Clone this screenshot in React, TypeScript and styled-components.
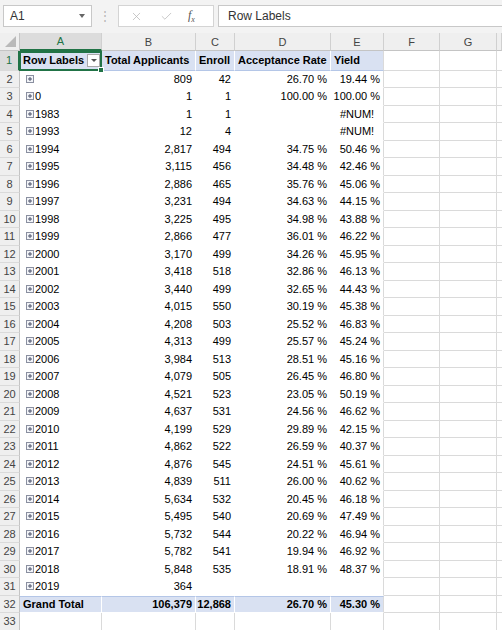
import React from 'react';
import styled, { createGlobalStyle } from 'styled-components';
import { X, Check } from 'lucide-react';

const Global = createGlobalStyle`
  html, body { margin: 0; padding: 0; background: #fff; }
  body { font-family: "Liberation Sans", Arial, sans-serif; }
  * { box-sizing: border-box; }
`;

const COLS = '20px 82px 94px 39px 96px 53px 56px 57px 1fr';
const GRID = '#dadada';
const HEAD_BG = '#efefef';
const PIVOT_BLUE = '#d9e1f2';
const GREEN = '#217346';

const Page = styled.div`
  width: 502px;
  height: 630px;
  overflow: hidden;
  background: #fff;
  display: flex;
  flex-direction: column;
`;

const FormulaBar = styled.div`
  height: 33px;
  flex: none;
  background: #f3f3f3;
  display: flex;
  align-items: flex-start;
  padding: 5px 0 0 3px;
`;

const NameBox = styled.div`
  width: 89px;
  height: 22px;
  background: #fff;
  border: 1px solid #c8c8c8;
  display: flex;
  align-items: center;
  justify-content: space-between;
  padding: 0 6px 0 6px;
  font-size: 12px;
  color: #333;
`;

const Caret = styled.span`
  width: 0;
  height: 0;
  border-left: 3.5px solid transparent;
  border-right: 3.5px solid transparent;
  border-top: 4px solid #666;
`;

const Dots = styled.div`
  width: 26px;
  height: 22px;
  display: flex;
  align-items: center;
  justify-content: center;
  color: #b5b5b5;
  font-size: 12px;
`;

const EditBox = styled.div`
  width: 96px;
  height: 22px;
  background: #fff;
  border: 1px solid #d4d4d4;
  display: flex;
  align-items: center;
  padding-left: 11px;
  gap: 17px;
  color: #b8b8b8;
`;

const Fx = styled.span`
  font-family: "Liberation Serif", "Times New Roman", serif;
  font-style: italic;
  font-size: 12px;
  color: #555;
  margin-left: -2px;
  sub {
    font-size: 8px;
    font-style: italic;
  }
`;

const FormulaInput = styled.div`
  flex: 1;
  height: 22px;
  margin-left: 4px;
  background: #fff;
  border: 1px solid #c8c8c8;
  border-right: none;
  display: flex;
  align-items: center;
  padding-left: 9px;
  font-size: 12px;
  color: #333;
`;

const Sheet = styled.div`
  flex: 1;
  display: flex;
  flex-direction: column;
`;

const Row = styled.div<{ $h: number }>`
  display: grid;
  grid-template-columns: ${COLS};
  height: ${(p) => p.$h}px;
  flex: none;
`;

const ColHead = styled.div<{ $sel?: boolean }>`
  background: ${(p) => (p.$sel ? '#dcdcdc' : HEAD_BG)};
  color: ${(p) => (p.$sel ? GREEN : '#444')};
  border-right: 1px solid #d0d0d0;
  border-bottom: ${(p) => (p.$sel ? `2px solid ${GREEN}` : '1px solid #c4c4c4')};
  font-size: 11px;
  display: flex;
  align-items: center;
  justify-content: center;
`;

const Corner = styled.div`
  background: ${HEAD_BG};
  border-right: 1px solid #c4c4c4;
  border-bottom: 1px solid #c4c4c4;
  display: flex;
  align-items: flex-end;
  justify-content: flex-end;
  padding: 0 3px 3px 0;
`;

const RowHead = styled.div<{ $sel?: boolean }>`
  background: ${(p) => (p.$sel ? '#dcdcdc' : HEAD_BG)};
  color: ${(p) => (p.$sel ? GREEN : '#444')};
  border-right: ${(p) => (p.$sel ? `2px solid ${GREEN}` : '1px solid #c4c4c4')};
  border-bottom: 1px solid #dadada;
  font-size: 11px;
  display: flex;
  align-items: center;
  justify-content: center;
`;

type Align = 'left' | 'right' | 'center';

const Cell = styled.div<{
  $align?: Align;
  $bold?: boolean;
  $fill?: string;
  $lines?: boolean;
  $top?: string;
  $bottom?: string;
}>`
  position: relative;
  background: ${(p) => p.$fill || '#fff'};
  border-right: 1px solid ${(p) => (p.$lines ? GRID : 'transparent')};
  border-bottom: 1px solid ${(p) => (p.$bottom ? p.$bottom : p.$lines ? GRID : 'transparent')};
  ${(p) => (p.$top ? `border-top: 1px solid ${p.$top};` : '')}
  background-clip: padding-box;
  font-size: 11px;
  font-weight: ${(p) => (p.$bold ? 700 : 400)};
  color: #000;
  display: flex;
  align-items: center;
  justify-content: ${(p) =>
    p.$align === 'right' ? 'flex-end' : p.$align === 'center' ? 'center' : 'flex-start'};
  padding: 0 3px;
  white-space: nowrap;
  overflow: visible;
`;

const Selection = styled.div`
  position: absolute;
  left: -1px;
  top: 0px;
  right: -1px;
  bottom: -1px;
  border: 2px solid ${GREEN};
  pointer-events: none;
  z-index: 2;
`;

const Handle = styled.div`
  position: absolute;
  right: -4px;
  bottom: -4px;
  width: 6px;
  height: 6px;
  background: ${GREEN};
  border: 1px solid #fff;
  z-index: 3;
`;

const FilterButton = styled.div`
  margin-left: auto;
  margin-right: -2px;
  width: 13px;
  height: 13px;
  background: #fff;
  border: 1px solid #a9a9a9;
  display: flex;
  align-items: center;
  justify-content: center;
`;

const SmallTri = styled.span`
  width: 0;
  height: 0;
  border-left: 3px solid transparent;
  border-right: 3px solid transparent;
  border-top: 3px solid #555;
`;

const ExpandBox = styled.svg`
  flex: none;
  margin: 0 1px 0 3px;
`;

const Expand = () => (
  <ExpandBox width="8" height="8" viewBox="0 0 8 8">
    <rect x="0.5" y="0.5" width="7" height="7" fill="#f2f4f8" stroke="#8a8fa0" />
    <line x1="2" y1="4" x2="6" y2="4" stroke="#4a5068" />
    <line x1="4" y1="2" x2="4" y2="6" stroke="#4a5068" />
  </ExpandBox>
);

const CornerTri = () => (
  <svg width="11" height="11" viewBox="0 0 11 11">
    <polygon points="11,0 11,11 0,11" fill="#b9b9b9" />
  </svg>
);

type Rec = [string, string, string, string, string];

const data: Rec[] = [
  ['', '809', '42', '26.70 %', '19.44 %'],
  ['0', '1', '1', '100.00 %', '100.00 %'],
  ['1983', '1', '1', '', '#NUM!'],
  ['1993', '12', '4', '', '#NUM!'],
  ['1994', '2,817', '494', '34.75 %', '50.46 %'],
  ['1995', '3,115', '456', '34.48 %', '42.46 %'],
  ['1996', '2,886', '465', '35.76 %', '45.06 %'],
  ['1997', '3,231', '494', '34.63 %', '44.15 %'],
  ['1998', '3,225', '495', '34.98 %', '43.88 %'],
  ['1999', '2,866', '477', '36.01 %', '46.22 %'],
  ['2000', '3,170', '499', '34.26 %', '45.95 %'],
  ['2001', '3,418', '518', '32.86 %', '46.13 %'],
  ['2002', '3,440', '499', '32.65 %', '44.43 %'],
  ['2003', '4,015', '550', '30.19 %', '45.38 %'],
  ['2004', '4,208', '503', '25.52 %', '46.83 %'],
  ['2005', '4,313', '499', '25.57 %', '45.24 %'],
  ['2006', '3,984', '513', '28.51 %', '45.16 %'],
  ['2007', '4,079', '505', '26.45 %', '46.80 %'],
  ['2008', '4,521', '523', '23.05 %', '50.19 %'],
  ['2009', '4,637', '531', '24.56 %', '46.62 %'],
  ['2010', '4,199', '529', '29.89 %', '42.15 %'],
  ['2011', '4,862', '522', '26.59 %', '40.37 %'],
  ['2012', '4,876', '545', '24.51 %', '45.61 %'],
  ['2013', '4,839', '511', '26.00 %', '40.62 %'],
  ['2014', '5,634', '532', '20.45 %', '46.18 %'],
  ['2015', '5,495', '540', '20.69 %', '47.49 %'],
  ['2016', '5,732', '544', '20.22 %', '46.94 %'],
  ['2017', '5,782', '541', '19.94 %', '46.92 %'],
  ['2018', '5,848', '535', '18.91 %', '48.37 %'],
  ['2019', '364', '', '', ''],
];

const letters = ['A', 'B', 'C', 'D', 'E', 'F', 'G', ''];

const BlankTail = () => (
  <>
    <Cell $lines />
    <Cell $lines />
    <Cell $lines />
  </>
);

export default function App() {
  const RH = 17.5;
  return (
    <Page>
      <Global />
      <FormulaBar>
        <NameBox>
          <span>A1</span>
          <Caret />
        </NameBox>
        <Dots>⋮</Dots>
        <EditBox>
          <X size={13} strokeWidth={1.4} />
          <Check size={13} strokeWidth={1.4} />
          <Fx>
            f<sub>x</sub>
          </Fx>
        </EditBox>
        <FormulaInput>Row Labels</FormulaInput>
      </FormulaBar>
      <Sheet>
        <Row $h={18}>
          <Corner>
            <CornerTri />
          </Corner>
          {letters.map((l, i) => (
            <ColHead key={i} $sel={l === 'A'}>
              {l}
            </ColHead>
          ))}
        </Row>
        <Row $h={19.5}>
          <RowHead $sel>1</RowHead>
          <Cell $bold $fill={PIVOT_BLUE} $bottom="#b4c6e7">
            Row Labels
            <FilterButton>
              <SmallTri />
            </FilterButton>
            <Selection>
              <Handle />
            </Selection>
          </Cell>
          <Cell $bold $fill={PIVOT_BLUE} $bottom="#b4c6e7">
            Total Applicants
          </Cell>
          <Cell $bold $fill={PIVOT_BLUE} $bottom="#b4c6e7">
            Enroll
          </Cell>
          <Cell $bold $fill={PIVOT_BLUE} $bottom="#b4c6e7">
            Acceptance Rate
          </Cell>
          <Cell $bold $fill={PIVOT_BLUE} $bottom="#b4c6e7" style={{ borderRightColor: GRID }}>
            Yield
          </Cell>
          <BlankTail />
        </Row>
        {data.map((r, i) => (
          <Row $h={RH} key={i}>
            <RowHead>{i + 2}</RowHead>
            <Cell>
              <Expand />
              {r[0]}
            </Cell>
            <Cell $align="right">{r[1]}</Cell>
            <Cell $align="right">{r[2]}</Cell>
            <Cell $align="right">{r[3]}</Cell>
            <Cell
              $align={r[4].startsWith('#') ? 'center' : 'right'}
              style={{ borderRightColor: GRID }}
            >
              {r[4]}
            </Cell>
            <BlankTail />
          </Row>
        ))}
        <Row $h={RH}>
          <RowHead>32</RowHead>
          <Cell $bold $fill={PIVOT_BLUE} $top="#b4c6e7">
            Grand Total
          </Cell>
          <Cell $bold $fill={PIVOT_BLUE} $top="#b4c6e7" $align="right">
            106,379
          </Cell>
          <Cell $bold $fill={PIVOT_BLUE} $top="#b4c6e7" $align="right">
            12,868
          </Cell>
          <Cell $bold $fill={PIVOT_BLUE} $top="#b4c6e7" $align="right">
            26.70 %
          </Cell>
          <Cell
            $bold
            $fill={PIVOT_BLUE}
            $top="#b4c6e7"
            $align="right"
            style={{ borderRightColor: GRID }}
          >
            45.30 %
          </Cell>
          <BlankTail />
        </Row>
        <Row $h={RH}>
          <RowHead>33</RowHead>
          <Cell $lines />
          <Cell $lines />
          <Cell $lines />
          <Cell $lines />
          <Cell $lines />
          <BlankTail />
        </Row>
      </Sheet>
    </Page>
  );
}
